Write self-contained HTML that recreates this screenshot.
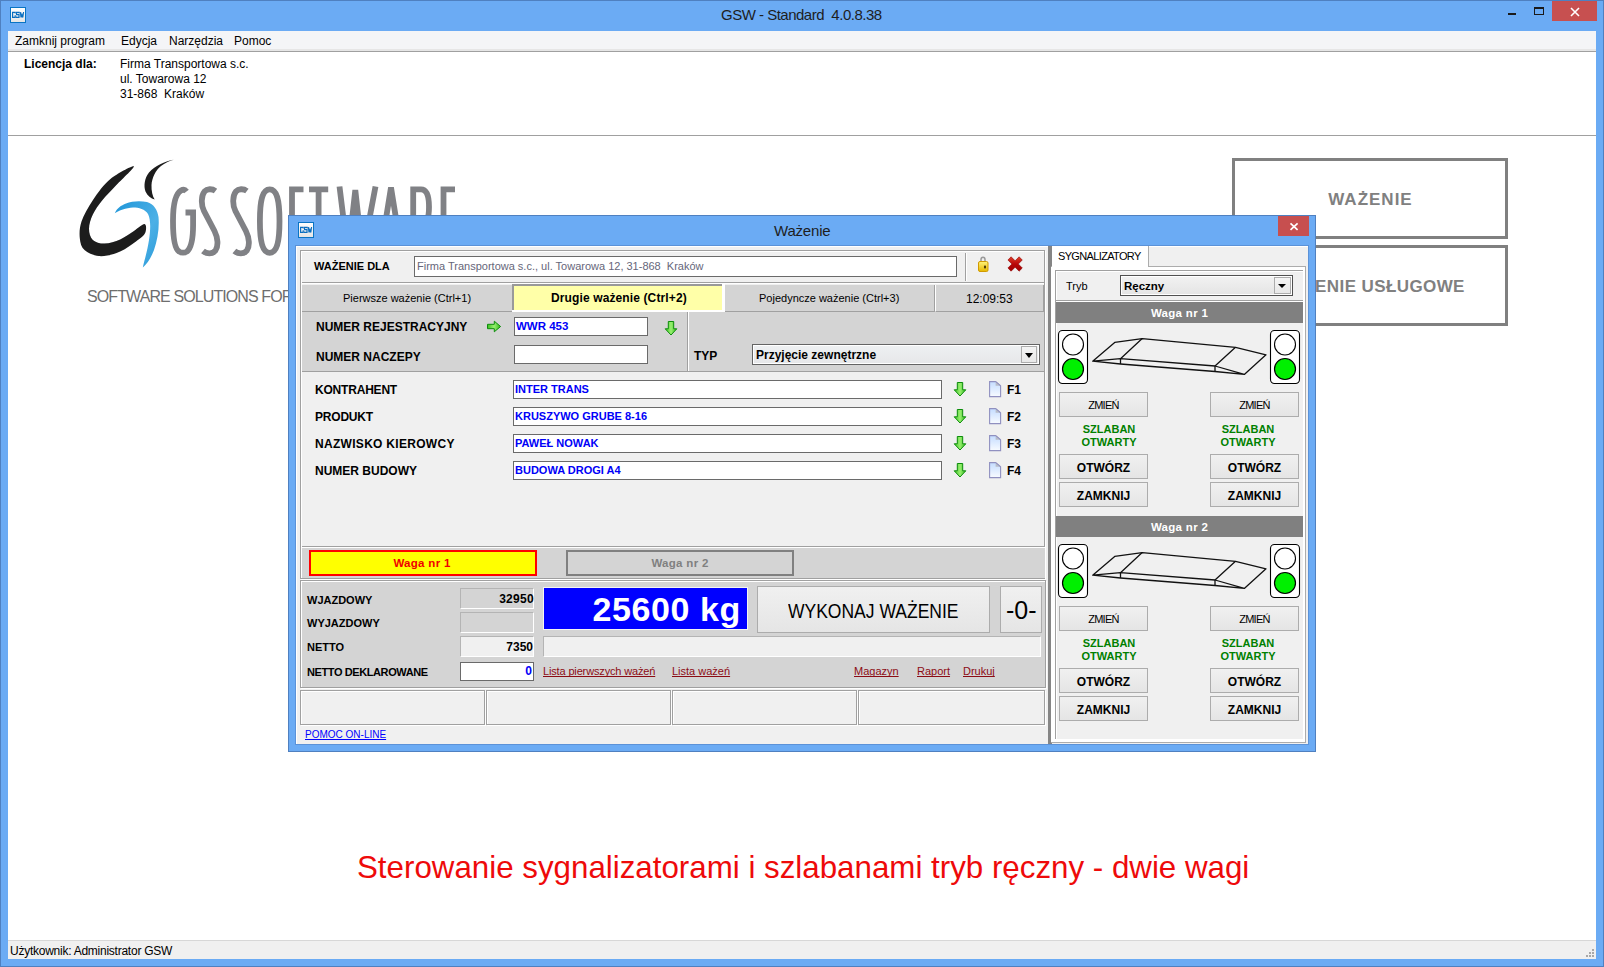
<!DOCTYPE html>
<html><head><meta charset="utf-8">
<style>
*{margin:0;padding:0;box-sizing:border-box}
html,body{width:1604px;height:967px;overflow:hidden}
body{position:relative;background:#6babf4;font-family:"Liberation Sans",sans-serif;color:#000}
.a{position:absolute}
.t{position:absolute;white-space:pre;line-height:1}
.b{font-weight:bold}
.etch{border:1px solid #a0a0a0;box-shadow:inset 1px 1px 0 #fff,1px 1px 0 #fff}
.etch2{border:1px solid #a0a0a0;box-shadow:inset 1px 1px 0 #fff,1px 1px 0 #fff;background:#f0f0f0}
.inp{background:#fff;border:1px solid #6a6a6a}
.ro{background:#d4d4d4;border:1px solid #b4b4b4;border-right-color:#fff;border-bottom-color:#fff}
.btn{border:1px solid #acacac;background:linear-gradient(#f0f0f0,#e5e5e5)}
.combo{border:1px solid #646464;box-shadow:inset 0 0 0 1px #fff;background:linear-gradient(#eef0f2,#e6e7e9)}
.cbtn{border:1px solid #acacac;background:linear-gradient(#f4f4f4,#e8e8e8)}
.tri{width:0;height:0;border-left:4.5px solid transparent;border-right:4.5px solid transparent;border-top:5px solid #000}
.lnk{color:#8c0c14;text-decoration:underline;text-decoration-skip-ink:none}
</style></head><body>
<svg width="0" height="0" style="position:absolute"><defs><linearGradient id="ga" x1="0" y1="0" x2="1" y2="0"><stop offset="0" stop-color="#3cc020"/><stop offset="0.5" stop-color="#98f070"/><stop offset="1" stop-color="#30b818"/></linearGradient><linearGradient id="gd" x1="0" y1="0" x2="0" y2="1"><stop offset="0" stop-color="#c4dcff"/><stop offset="1" stop-color="#f8fbff"/></linearGradient></defs></svg>
<!-- main window frame -->
<div class="a" style="left:0;top:0;width:1604px;height:967px;border:1px solid #4f80c0"></div>
<!-- icon -->
<svg class="a" style="left:10px;top:7px" width="16" height="16" viewBox="0 0 16 16">
<defs><linearGradient id="ig10" x1="0" y1="0" x2="0" y2="1"><stop offset="0" stop-color="#fff"/><stop offset="1" stop-color="#e4e4e4"/></linearGradient></defs>
<rect x="0.5" y="0.5" width="15" height="15" fill="url(#ig10)" stroke="#0a74c4" stroke-width="1"/>
<g fill="none" stroke="#0a6ec0" stroke-width="1.2">
<path d="M5.2,6.6 V5.4 H2.6 V10.4 H5.2 V8.2"/>
<path d="M9.2,6.4 V5.4 H6.6 V7.7 H9 V10.4 H6.4 V9.4"/>
<path d="M10.3,5 L11,10.5 L11.9,7.2 L12.8,10.5 L13.6,5" stroke-width="1.1"/>
</g></svg>
<!-- title -->
<div class="t" style="left:721px;top:7px;font-size:15px;letter-spacing:-0.5px;color:#1e1e1e">GSW - Standard  4.0.8.38</div>
<!-- min max close -->
<div class="a" style="left:1508px;top:13px;width:8px;height:2px;background:#1a1a1a"></div>
<div class="a" style="left:1534px;top:7px;width:10px;height:8px;border:1px solid #1a1a1a;border-top-width:2px"></div>
<div class="a" style="left:1552px;top:1px;width:45px;height:20px;background:#c75050"></div>
<svg class="a" style="left:1570px;top:7px" width="10" height="10" viewBox="0 0 10 10"><path d="M1,1 L9,9 M9,1 L1,9" stroke="#fff" stroke-width="1.6"/></svg>

<!-- client -->
<div class="a" style="left:8px;top:31px;width:1588px;height:928px;background:#fff;overflow:hidden">
  <!-- menu -->
  <div class="a" style="left:0;top:0;width:1588px;height:21px;background:#f4f5f7;border-bottom:1px solid #a0a0a0;box-shadow:inset 0 -2px 0 #e6e6e6"></div>
  <div class="t" style="left:7px;top:4px;font-size:12px;color:#000">Zamknij program</div>
  <div class="t" style="left:113px;top:4px;font-size:12px;color:#000">Edycja</div>
  <div class="t" style="left:161px;top:4px;font-size:12px;color:#000">Narzędzia</div>
  <div class="t" style="left:226px;top:4px;font-size:12px;color:#000">Pomoc</div>
  <!-- license -->
  <div class="t b" style="left:16px;top:27px;font-size:12px">Licencja dla:</div>
  <div class="t" style="left:112px;top:26px;font-size:12px;line-height:15px">Firma Transportowa s.c.
ul. Towarowa 12
31-868  Kraków</div>
  <div class="a" style="left:0;top:104px;width:1588px;height:1px;background:#a0a0a0"></div>
  <!-- status bar -->
  <div class="a" style="left:0;top:909px;width:1588px;height:19px;background:#f0f0f0;border-top:1px solid #d7d7d7"></div>
  <div class="a" style="left:1584px;top:918px;width:2px;height:2px;background:#a8a8a8"></div><div class="a" style="left:1581px;top:921px;width:2px;height:2px;background:#a8a8a8"></div><div class="a" style="left:1584px;top:921px;width:2px;height:2px;background:#a8a8a8"></div><div class="a" style="left:1578px;top:924px;width:2px;height:2px;background:#a8a8a8"></div><div class="a" style="left:1581px;top:924px;width:2px;height:2px;background:#a8a8a8"></div><div class="a" style="left:1584px;top:924px;width:2px;height:2px;background:#a8a8a8"></div>
  <div class="t" style="left:2px;top:914px;font-size:12px;letter-spacing:-0.25px;color:#000">Użytkownik: Administrator GSW</div>
</div>

<!-- logo -->
<svg class="a" style="left:70px;top:150px" width="120" height="125" viewBox="70 150 120 125">
  <defs><linearGradient id="bl" x1="0" y1="0" x2="1" y2="1"><stop offset="0" stop-color="#1f96d8"/><stop offset="0.6" stop-color="#4cb0e6"/><stop offset="1" stop-color="#2a9ad8"/></linearGradient></defs>
  <path d="M130.9,169.3 C131.1,169.5 120.2,180.8 115.4,185.9 C110.7,191.1 106.1,195.4 102.3,200.2 C98.6,204.9 95.1,209.7 92.8,214.5 C90.6,219.2 89.0,224.5 89.0,228.7 C89.0,233.0 90.2,237.5 92.8,240.0 C95.5,242.5 100.2,243.7 104.7,243.6 C109.3,243.5 115.6,241.3 120.2,239.4 C124.7,237.5 128.5,234.5 132.1,232.3 C135.6,230.1 141.6,226.0 141.6,226.3 C141.6,226.7 135.6,231.9 132.1,234.4 C128.5,237.0 124.7,239.7 120.2,241.6 C115.6,243.4 109.5,245.6 104.7,245.6 C100.0,245.6 94.6,244.6 91.6,241.8 C88.7,239.0 87.0,233.5 86.9,228.7 C86.8,224.0 88.8,218.2 91.1,213.3 C93.3,208.3 96.7,203.8 100.6,199.0 C104.4,194.2 109.2,189.7 114.2,184.7 C119.3,179.8 130.7,169.1 130.9,169.3 Z" fill="#aeb2b6" opacity="0.8"/><path d="M133.9,166.3 C133.1,165.1 117.5,173.1 110.7,178.8 C103.8,184.4 97.7,193.0 92.8,200.2 C88.0,207.3 83.7,215.2 81.5,221.6 C79.4,227.9 79.3,233.5 79.8,238.2 C80.3,243.0 81.3,247.2 84.5,250.1 C87.7,253.1 93.4,255.6 98.8,256.1 C104.1,256.6 111.1,255.1 116.6,253.1 C122.2,251.1 127.4,247.4 132.1,244.2 C136.7,241.0 142.5,237.4 144.6,234.1 C146.6,230.7 146.6,224.3 144.6,224.0 C142.5,223.7 136.1,229.7 132.1,232.3 C128.0,234.9 124.7,237.5 120.2,239.4 C115.6,241.3 109.3,243.5 104.7,243.6 C100.2,243.7 95.5,242.5 92.8,240.0 C90.2,237.5 89.0,233.0 89.0,228.7 C89.0,224.5 90.6,219.2 92.8,214.5 C95.1,209.7 98.6,204.9 102.3,200.2 C106.1,195.4 110.2,191.6 115.4,185.9 C120.7,180.3 134.7,167.5 133.9,166.3 Z" fill="#1c1c1c"/>
  <path d="M173.7,159.8 C166,161 155,165.5 149,172.5 C144.5,178 143.5,186 145.5,191.5 C147.5,196 151,198.5 154.7,199.6 C152.5,196 151.3,191 151.5,185 C152,178 155.5,170 161,166 C165,163 169,161 173.7,159.8 Z" fill="#1c1c1c"/>
  <path d="M114.8,213.3 C117,208 121,205.5 126,203.5 C132,201 140,200.5 147,202 C154,204 157.5,210 158.5,217 C159.5,228 157.5,240 154,250 C151,258 147,264 142.8,267.4 C144.5,260 147.5,250 149,240 C150.5,230 151,220 148,214 C145,209 139,207.5 133,207.5 C126,207.8 119,210.5 114.8,213.3 Z" fill="url(#bl)"/>
</svg>
<svg class="a" style="left:160px;top:180px" width="310" height="85" viewBox="160 180 310 85">
<g fill="none" stroke="#808185" stroke-width="5.8" stroke-linecap="butt">
<path d="M186.5,191.5 C185,189.5 183,189.3 181,190.5 C175,194 173,206 173,221 C173,238 175,249 179,251.5 C181,253 185,253 187,251.5 C191,248 193.1,239 193.1,225 V212.5 H185.5"/>
<path d="M215.5,191 C212,188.5 207,188.7 204.5,191.5 C201,196 201,205 204,211 L214.5,231 C218,238 218.5,246 215.5,250.5 C212.5,254.5 206.5,254 203,251"/>
<path d="M246.9,191 C243.4,188.5 238.4,188.7 235.9,191.5 C232.4,196 232.4,205 235.4,211 L245.9,231 C249.4,238 249.9,246 246.9,250.5 C243.9,254.5 237.9,254 234.4,251"/>
<path d="M269.7,189.4 C276.5,189.4 279.5,199 279.5,221 C279.5,243 276.5,252.79999999999998 269.7,252.79999999999998 C262.9,252.79999999999998 259.9,243 259.9,221 C259.9,199 262.9,189.4 269.7,189.4 Z"/>
<path d="M292,255.7 V189.4 H303.5 M292,219 H301"/>
<path d="M309,189.4 H328.2 M318.6,189.4 V255.7"/>
<path d="M339.5,186.5 L348,255.5 L355.3,190 L362.5,255.5 L375.5,186.5"/>
<path d="M380,255.7 L391,187.5 L402,255.7 M384,232 H398"/>
<path d="M413.2,255.7 V189.4 H421 C427,189.4 429,196 429,207 C429,218 427,223 421,223 H413.2 M420,223 L430,255.7"/>
<path d="M443.5,255.7 V189.4 H455 M443.5,219 H453 M443.5,252.79999999999998 H455.5"/>
</g></svg>
<div class="t" style="left:87px;top:289px;font-size:16px;color:#6e6e6e;letter-spacing:-0.9px">SOFTWARE SOLUTIONS FOR</div>

<!-- right boxes -->
<div class="a" style="left:1232px;top:158px;width:276px;height:81px;border:3px solid #808080;background:#fff"></div>
<div class="t b" style="left:1232px;top:191px;width:277px;text-align:center;font-size:17px;letter-spacing:1px;color:#808080">WAŻENIE</div>
<div class="a" style="left:1232px;top:245px;width:276px;height:81px;border:3px solid #808080;background:#fff"></div>
<div class="t b" style="left:1232px;top:278px;width:277px;text-align:center;font-size:17px;letter-spacing:0.4px;color:#808080">WAŻENIE USŁUGOWE</div>

<!-- red caption -->
<div class="t" style="left:357px;top:852px;font-size:31.3px;color:#ee0a0a">Sterowanie sygnalizatorami i szlabanami tryb ręczny - dwie wagi</div>

<!-- DIALOG -->
<div class="a" style="left:288px;top:215px;width:1028px;height:537px;background:#6babf4;border:1px solid #4f80c0"></div>
<svg class="a" style="left:298px;top:222px" width="16" height="16" viewBox="0 0 16 16">
<defs><linearGradient id="ig298" x1="0" y1="0" x2="0" y2="1"><stop offset="0" stop-color="#fff"/><stop offset="1" stop-color="#e4e4e4"/></linearGradient></defs>
<rect x="0.5" y="0.5" width="15" height="15" fill="url(#ig298)" stroke="#0a74c4" stroke-width="1"/>
<g fill="none" stroke="#0a6ec0" stroke-width="1.2">
<path d="M5.2,6.6 V5.4 H2.6 V10.4 H5.2 V8.2"/>
<path d="M9.2,6.4 V5.4 H6.6 V7.7 H9 V10.4 H6.4 V9.4"/>
<path d="M10.3,5 L11,10.5 L11.9,7.2 L12.8,10.5 L13.6,5" stroke-width="1.1"/>
</g></svg>
<div class="t" style="left:774px;top:223px;font-size:15px;letter-spacing:-0.2px;color:#1e1e1e">Ważenie</div>
<div class="a" style="left:1278px;top:216px;width:31px;height:20px;background:#c74f4f"></div>
<svg class="a" style="left:1288px;top:221px" width="12" height="12" viewBox="0 0 12 12"><path d="M2.5,2.3 L9.6,8.8 M9.6,2.3 L2.5,8.8" stroke="#fff" stroke-width="1.7"/></svg>
<div class="a" style="left:295px;top:245px;width:1014px;height:500px;border:1px solid #5b92d8;background:#f0f0f0;box-shadow:inset 1px 1px 0 #fff"></div>

<!-- main frame -->
<div class="a etch" style="left:300px;top:250px;width:745px;height:329px"></div>
<div class="a" style="left:302px;top:282px;width:742px;height:1px;background:#a0a0a0;box-shadow:0 1px 0 #fff"></div>
<div class="t b" style="left:314px;top:261px;font-size:11px">WAŻENIE DLA</div>
<div class="a inp" style="left:414px;top:256px;width:543px;height:21px"></div>
<div class="t" style="left:417px;top:261px;font-size:11px;color:#66667a">Firma Transportowa s.c., ul. Towarowa 12, 31-868  Kraków</div>
<div class="a" style="left:965px;top:253px;width:1px;height:28px;background:#a0a0a0;box-shadow:1px 0 0 #fff"></div>
<!-- lock icon -->
<svg class="a" style="left:976px;top:255px" width="16" height="18" viewBox="976 255 16 18">
 <defs><linearGradient id="lk" x1="0" y1="0" x2="0" y2="1"><stop offset="0" stop-color="#fff27a"/><stop offset="1" stop-color="#e6b800"/></linearGradient></defs>
 <path d="M981,264 V259.5 C981,257.8 982,257.2 983,257.2 C984,257.2 985,257.8 985,259.5 V264" fill="none" stroke="#9a9a9a" stroke-width="1.5"/>
 <rect x="978.5" y="261.5" width="9.5" height="10" rx="1.5" fill="url(#lk)" stroke="#d19a00" stroke-width="1"/>
 <path d="M985,265 L986.2,267 L985,269 L983.8,267 Z" fill="#3a2a00"/>
</svg>
<!-- red x -->
<svg class="a" style="left:1006px;top:255px" width="18" height="18" viewBox="1006 255 18 18">
 <defs><linearGradient id="rx" x1="0" y1="0" x2="0" y2="1"><stop offset="0" stop-color="#e0402a"/><stop offset="0.5" stop-color="#b80808"/><stop offset="1" stop-color="#a00000"/></linearGradient></defs>
 <path d="M1007.9,260.0 L1011.1,256.8 L1015.1,260.8 L1019.1,256.8 L1022.3,260.0 L1018.3,264.0 L1022.3,268.0 L1019.1,271.2 L1015.1,267.2 L1011.1,271.2 L1007.9,268.0 L1011.9,264.0 Z" fill="url(#rx)" stroke="#900000" stroke-width="0.6" stroke-linejoin="round"/>
</svg>

<!-- tabs -->
<div class="a" style="left:302px;top:285px;width:210px;height:27px;background:#d4d4d4;border-bottom:1px solid #a0a0a0"></div>
<div class="t" style="left:343px;top:293px;font-size:11px;color:#000">Pierwsze ważenie (Ctrl+1)</div>
<div class="a" style="left:512px;top:284px;width:213px;height:28px;background:#fff;"></div><div class="a" style="left:512px;top:284px;width:210px;height:26px;background:#ffffa8;border-left:2px solid #999;border-top:2px solid #999"></div>
<div class="t b" style="left:551px;top:292px;font-size:12px;letter-spacing:0.12px;color:#000">Drugie ważenie (Ctrl+2)</div>
<div class="a" style="left:725px;top:285px;width:210px;height:27px;background:#d4d4d4;border-bottom:1px solid #a0a0a0;border-right:1px solid #a0a0a0"></div>
<div class="t" style="left:759px;top:293px;font-size:11px;color:#000">Pojedyncze ważenie (Ctrl+3)</div>
<div class="a" style="left:935px;top:285px;width:109px;height:27px;background:#d4d4d4;border-left:1px solid #fff;border-bottom:1px solid #a0a0a0;border-right:1px solid #a0a0a0"></div>
<div class="t" style="left:966px;top:293px;font-size:12px;color:#000">12:09:53</div>

<!-- registration panel -->
<div class="a" style="left:302px;top:312px;width:742px;height:60px;background:#d4d4d4;border-bottom:1px solid #a0a0a0"></div>
<div class="a" style="left:687px;top:312px;width:1px;height:59px;background:#a0a0a0;box-shadow:1px 0 0 #fff"></div>
<div class="t b" style="left:316px;top:321px;font-size:12px">NUMER REJESTRACYJNY</div>
<svg class="a" style="left:486px;top:320px" width="16" height="13" viewBox="0 0 16 13"><path d="M1.5,4.3 H8.3 V1.2 L14.6,6.5 L8.3,11.8 V8.7 H1.5 Z" fill="url(#ga)" stroke="#0c8c0c" stroke-width="1"/></svg>
<div class="a inp" style="left:514px;top:317px;width:134px;height:19px"></div>
<div class="t b" style="left:516px;top:321px;font-size:11.5px;color:#0000f8">WWR 453</div>
<svg class="a" style="left:664px;top:320px" width="14" height="16" viewBox="0 0 14 16"><path d="M4.3,1.5 H9.7 V8.8 H12.8 L7,15 L1.2,8.8 H4.3 Z" fill="url(#ga)" stroke="#0c8c0c" stroke-width="1"/></svg>
<div class="t b" style="left:316px;top:351px;font-size:12px">NUMER NACZEPY</div>
<div class="a inp" style="left:514px;top:345px;width:134px;height:19px"></div>
<div class="t b" style="left:694px;top:350px;font-size:12px">TYP</div>
<div class="a combo" style="left:752px;top:344px;width:288px;height:21px"></div>
<div class="t b" style="left:756px;top:349px;font-size:12px">Przyjęcie zewnętrzne</div>
<div class="a cbtn" style="left:1021px;top:346px;width:16px;height:17px"></div>
<div class="a tri" style="left:1025px;top:353px"></div>

<!-- form -->
<div class="t b" style="left:315px;top:384px;font-size:12px;letter-spacing:-0.2px">KONTRAHENT</div>
<div class="a inp" style="left:513px;top:380px;width:429px;height:19px"></div>
<div class="t b" style="left:515px;top:384px;font-size:11px;color:#0000f8">INTER TRANS</div>
<svg class="a" style="left:953px;top:381px" width="14" height="16" viewBox="0 0 14 16"><path d="M4.3,1.5 H9.7 V8.8 H12.8 L7,15 L1.2,8.8 H4.3 Z" fill="url(#ga)" stroke="#0c8c0c" stroke-width="1"/></svg>
<svg class="a" style="left:988px;top:381px" width="14" height="17" viewBox="0 0 14 17"><path d="M1.6,0.6 H7.6 L12.6,4.8 V15.6 H1.6 Z" fill="url(#gd)" stroke="#9090c0" stroke-width="1.1"/><path d="M7.6,0.6 V4.8 H12.6 Z" fill="#b8bcc8" stroke="none"/><path d="M7.6,0.6 L12.6,4.8" stroke="#9090c0" stroke-width="1"/></svg>
<div class="t b" style="left:1007px;top:384px;font-size:12px">F1</div>
<div class="t b" style="left:315px;top:411px;font-size:12px;letter-spacing:-0.2px">PRODUKT</div>
<div class="a inp" style="left:513px;top:407px;width:429px;height:19px"></div>
<div class="t b" style="left:515px;top:411px;font-size:11px;color:#0000f8">KRUSZYWO GRUBE 8-16</div>
<svg class="a" style="left:953px;top:408px" width="14" height="16" viewBox="0 0 14 16"><path d="M4.3,1.5 H9.7 V8.8 H12.8 L7,15 L1.2,8.8 H4.3 Z" fill="url(#ga)" stroke="#0c8c0c" stroke-width="1"/></svg>
<svg class="a" style="left:988px;top:408px" width="14" height="17" viewBox="0 0 14 17"><path d="M1.6,0.6 H7.6 L12.6,4.8 V15.6 H1.6 Z" fill="url(#gd)" stroke="#9090c0" stroke-width="1.1"/><path d="M7.6,0.6 V4.8 H12.6 Z" fill="#b8bcc8" stroke="none"/><path d="M7.6,0.6 L12.6,4.8" stroke="#9090c0" stroke-width="1"/></svg>
<div class="t b" style="left:1007px;top:411px;font-size:12px">F2</div>
<div class="t b" style="left:315px;top:438px;font-size:12px;letter-spacing:0.3px">NAZWISKO KIEROWCY</div>
<div class="a inp" style="left:513px;top:434px;width:429px;height:19px"></div>
<div class="t b" style="left:515px;top:438px;font-size:11px;color:#0000f8">PAWEŁ NOWAK</div>
<svg class="a" style="left:953px;top:435px" width="14" height="16" viewBox="0 0 14 16"><path d="M4.3,1.5 H9.7 V8.8 H12.8 L7,15 L1.2,8.8 H4.3 Z" fill="url(#ga)" stroke="#0c8c0c" stroke-width="1"/></svg>
<svg class="a" style="left:988px;top:435px" width="14" height="17" viewBox="0 0 14 17"><path d="M1.6,0.6 H7.6 L12.6,4.8 V15.6 H1.6 Z" fill="url(#gd)" stroke="#9090c0" stroke-width="1.1"/><path d="M7.6,0.6 V4.8 H12.6 Z" fill="#b8bcc8" stroke="none"/><path d="M7.6,0.6 L12.6,4.8" stroke="#9090c0" stroke-width="1"/></svg>
<div class="t b" style="left:1007px;top:438px;font-size:12px">F3</div>
<div class="t b" style="left:315px;top:465px;font-size:12px">NUMER BUDOWY</div>
<div class="a inp" style="left:513px;top:461px;width:429px;height:19px"></div>
<div class="t b" style="left:515px;top:465px;font-size:11px;color:#0000f8">BUDOWA DROGI A4</div>
<svg class="a" style="left:953px;top:462px" width="14" height="16" viewBox="0 0 14 16"><path d="M4.3,1.5 H9.7 V8.8 H12.8 L7,15 L1.2,8.8 H4.3 Z" fill="url(#ga)" stroke="#0c8c0c" stroke-width="1"/></svg>
<svg class="a" style="left:988px;top:462px" width="14" height="17" viewBox="0 0 14 17"><path d="M1.6,0.6 H7.6 L12.6,4.8 V15.6 H1.6 Z" fill="url(#gd)" stroke="#9090c0" stroke-width="1.1"/><path d="M7.6,0.6 V4.8 H12.6 Z" fill="#b8bcc8" stroke="none"/><path d="M7.6,0.6 L12.6,4.8" stroke="#9090c0" stroke-width="1"/></svg>
<div class="t b" style="left:1007px;top:465px;font-size:12px">F4</div>


<div class="a" style="left:302px;top:546px;width:743px;height:1px;background:#a0a0a0;box-shadow:0 1px 0 #fff"></div>
<div class="a" style="left:302px;top:548px;width:743px;height:30px;background:#d4d4d4"></div>
<div class="a" style="left:309px;top:550px;width:228px;height:26px;background:#ffff00;border:2px solid #ff0000"></div>
<div class="t b" style="left:309px;width:226px;text-align:center;top:558px;font-size:11.5px;letter-spacing:0.3px;color:#f00000">Waga nr 1</div>
<div class="a" style="left:566px;top:550px;width:228px;height:26px;background:#d4d4d4;border:2px solid #808080"></div>
<div class="t b" style="left:566px;width:228px;text-align:center;top:558px;font-size:11.5px;letter-spacing:0.3px;color:#808080">Waga nr 2</div>

<!-- weight panel -->
<div class="a etch" style="left:300px;top:580px;width:746px;height:108px"></div>
<div class="a" style="left:302px;top:582px;width:743px;height:105px;background:#d4d4d4"></div>
<div class="t b" style="left:307px;top:594.5px;font-size:11px">WJAZDOWY</div>
<div class="t b" style="left:307px;top:618px;font-size:11px">WYJAZDOWY</div>
<div class="t b" style="left:307px;top:642px;font-size:11px">NETTO</div>
<div class="t b" style="left:307px;top:667px;font-size:11px;letter-spacing:-0.4px">NETTO DEKLAROWANE</div>
<div class="a ro" style="left:460px;top:588px;width:74px;height:21px"></div>
<div class="t b" style="left:460px;top:593px;width:74px;text-align:right;font-size:12px;letter-spacing:0.3px">32950</div>
<div class="a ro" style="left:460px;top:612px;width:74px;height:21px"></div>
<div class="a ro" style="left:460px;top:636px;width:74px;height:21px;background:#f0f0f0"></div>
<div class="t b" style="left:460px;top:641px;width:73px;text-align:right;font-size:12px">7350</div>
<div class="a inp" style="left:460px;top:662px;width:74px;height:19px"></div>
<div class="t b" style="left:460px;top:665px;width:72px;text-align:right;font-size:12px;color:#0000f8">0</div>

<div class="a" style="left:543px;top:587px;width:205px;height:43px;background:#0000ff;border:1px solid #f4f4f4"></div>
<div class="t b" style="left:543px;top:591.5px;width:198px;text-align:right;font-size:34px;color:#fff;letter-spacing:0.6px">25600 kg</div>
<div class="a btn" style="left:757px;top:586px;width:233px;height:47px"></div>
<div class="t" style="left:788px;top:600.5px;font-size:20px;transform:scaleX(.875);transform-origin:0 0">WYKONAJ WAŻENIE</div>
<div class="a btn" style="left:1000px;top:586px;width:42px;height:47px"></div>
<div class="t" style="left:1006px;top:598px;font-size:25px">-0-</div>
<div class="a ro" style="left:543px;top:636px;width:498px;height:21px;background:#f0f0f0"></div>
<div class="t lnk" style="left:543px;top:666px;font-size:11px;letter-spacing:-0.15px">Lista pierwszych ważeń</div>
<div class="t lnk" style="left:672px;top:666px;font-size:11px">Lista ważeń</div>
<div class="t lnk" style="left:854px;top:666px;font-size:11px">Magazyn</div>
<div class="t lnk" style="left:917px;top:666px;font-size:11px">Raport</div>
<div class="t lnk" style="left:963px;top:666px;font-size:11px">Drukuj</div>

<!-- status panels -->
<div class="a etch2" style="left:300px;top:690px;width:185px;height:35px"></div>
<div class="a etch2" style="left:486px;top:690px;width:185px;height:35px"></div>
<div class="a etch2" style="left:672px;top:690px;width:185px;height:35px"></div>
<div class="a etch2" style="left:858px;top:690px;width:187px;height:35px"></div>
<div class="t" style="left:305px;top:730px;font-size:10px;color:#0000ff;text-decoration:underline;text-decoration-skip-ink:none">POMOC ON-LINE</div>

<!-- splitter -->
<div class="a" style="left:1048px;top:246px;width:4px;height:498px;background:#858585"></div>

<!-- side panel -->
<div class="a" style="left:1051px;top:266px;width:255px;height:477px;background:#fff;border-top:1px solid #acacac;border-right:1px solid #acacac;border-bottom:1px solid #acacac"></div>
<div class="a" style="left:1052px;top:246px;width:97px;height:21px;background:#fff;border-right:1px solid #acacac"></div>
<div class="t" style="left:1058px;top:251px;font-size:11px;letter-spacing:-0.65px">SYGNALIZATORY</div>
<div class="a" style="left:1055px;top:270px;width:248px;height:469px;background:#f0f0f0;border-left:1px solid #a0a0a0;border-top:1px solid #a0a0a0;box-shadow:inset 1px 1px 0 #fff"></div>
<div class="a" style="left:1056px;top:300px;width:247px;height:1px;background:#a0a0a0;box-shadow:0 1px 0 #fff"></div>
<div class="t" style="left:1066px;top:281px;font-size:11px">Tryb</div>
<div class="a" style="left:1120px;top:275px;width:173px;height:21px;border:1px solid #505050;box-shadow:inset 0 0 0 1px #fff;background:linear-gradient(#f2f2f2,#e4e4e4)"></div>
<div class="t b" style="left:1124px;top:281px;font-size:11.5px">Ręczny</div>
<div class="a cbtn" style="left:1274px;top:277px;width:17px;height:17px"></div>
<div class="a tri" style="left:1278px;top:284px;border-left-width:4px;border-right-width:4px;border-top-width:4px"></div>
<div class="a" style="left:1056px;top:302px;width:247px;height:21px;background:#808080"></div>
<div class="t b" style="left:1056px;top:308px;width:247px;text-align:center;font-size:11.5px;letter-spacing:0.3px;color:#fff">Waga nr 1</div>
<svg class="a" style="left:1056px;top:328px" width="247" height="60" viewBox="1056 328 247 60">
 <g fill="#fff" stroke="#000" stroke-width="1.1">
 <rect x="1058.5" y="330.5" width="29" height="53" rx="4"/>
 <rect x="1270.5" y="330.5" width="29" height="53" rx="4"/>
 <circle cx="1073" cy="344.5" r="10.5"/>
 <circle cx="1285" cy="344.5" r="10.5"/>
 </g>
 <g fill="#00f000" stroke="#000" stroke-width="1.2">
 <circle cx="1073" cy="369" r="10.5"/>
 <circle cx="1285" cy="369" r="10.5"/>
 </g>
 <g fill="none" stroke="#111" stroke-width="1.3" stroke-linejoin="round">
 <path d="M1092.7,361.2 L1114.7,342.4 L1142.2,338.6 L1235.5,347.3 L1266,354.8 L1244.3,374.4 L1215,371.5 L1120.5,364 L1092.7,361.2 L1120.5,358.7 L1215,366 L1244.3,374.4"/>
 <path d="M1142.2,338.6 L1120.5,358.7 M1235.5,347.3 L1215,366 M1120.5,358.7 V364 M1215,366 V371.5"/>
 </g>
</svg>
<div class="a btn" style="left:1059px;top:392px;width:89px;height:25px"></div>
<div class="t" style="left:1059px;top:400px;width:89px;text-align:center;font-size:11px;letter-spacing:-0.7px">ZMIEŃ</div>
<div class="a btn" style="left:1210px;top:392px;width:89px;height:25px"></div>
<div class="t" style="left:1210px;top:400px;width:89px;text-align:center;font-size:11px;letter-spacing:-0.7px">ZMIEŃ</div>
<div class="t b" style="left:1059px;top:423px;width:100px;text-align:center;font-size:11px;line-height:13px;color:#008000">SZLABAN
OTWARTY</div>
<div class="t b" style="left:1198px;top:423px;width:100px;text-align:center;font-size:11px;line-height:13px;color:#008000">SZLABAN
OTWARTY</div>
<div class="a btn" style="left:1059px;top:454px;width:89px;height:25px"></div>
<div class="t b" style="left:1059px;top:462px;width:89px;text-align:center;font-size:12px">OTWÓRZ</div>
<div class="a btn" style="left:1210px;top:454px;width:89px;height:25px"></div>
<div class="t b" style="left:1210px;top:462px;width:89px;text-align:center;font-size:12px">OTWÓRZ</div>
<div class="a btn" style="left:1059px;top:482px;width:89px;height:25px"></div>
<div class="t b" style="left:1059px;top:490px;width:89px;text-align:center;font-size:12px">ZAMKNIJ</div>
<div class="a btn" style="left:1210px;top:482px;width:89px;height:25px"></div>
<div class="t b" style="left:1210px;top:490px;width:89px;text-align:center;font-size:12px">ZAMKNIJ</div>
<div class="a" style="left:1056px;top:516px;width:247px;height:21px;background:#808080"></div>
<div class="t b" style="left:1056px;top:522px;width:247px;text-align:center;font-size:11.5px;letter-spacing:0.3px;color:#fff">Waga nr 2</div>
<svg class="a" style="left:1056px;top:542px" width="247" height="60" viewBox="1056 328 247 60">
 <g fill="#fff" stroke="#000" stroke-width="1.1">
 <rect x="1058.5" y="330.5" width="29" height="53" rx="4"/>
 <rect x="1270.5" y="330.5" width="29" height="53" rx="4"/>
 <circle cx="1073" cy="344.5" r="10.5"/>
 <circle cx="1285" cy="344.5" r="10.5"/>
 </g>
 <g fill="#00f000" stroke="#000" stroke-width="1.2">
 <circle cx="1073" cy="369" r="10.5"/>
 <circle cx="1285" cy="369" r="10.5"/>
 </g>
 <g fill="none" stroke="#111" stroke-width="1.3" stroke-linejoin="round">
 <path d="M1092.7,361.2 L1114.7,342.4 L1142.2,338.6 L1235.5,347.3 L1266,354.8 L1244.3,374.4 L1215,371.5 L1120.5,364 L1092.7,361.2 L1120.5,358.7 L1215,366 L1244.3,374.4"/>
 <path d="M1142.2,338.6 L1120.5,358.7 M1235.5,347.3 L1215,366 M1120.5,358.7 V364 M1215,366 V371.5"/>
 </g>
</svg>
<div class="a btn" style="left:1059px;top:606px;width:89px;height:25px"></div>
<div class="t" style="left:1059px;top:614px;width:89px;text-align:center;font-size:11px;letter-spacing:-0.7px">ZMIEŃ</div>
<div class="a btn" style="left:1210px;top:606px;width:89px;height:25px"></div>
<div class="t" style="left:1210px;top:614px;width:89px;text-align:center;font-size:11px;letter-spacing:-0.7px">ZMIEŃ</div>
<div class="t b" style="left:1059px;top:637px;width:100px;text-align:center;font-size:11px;line-height:13px;color:#008000">SZLABAN
OTWARTY</div>
<div class="t b" style="left:1198px;top:637px;width:100px;text-align:center;font-size:11px;line-height:13px;color:#008000">SZLABAN
OTWARTY</div>
<div class="a btn" style="left:1059px;top:668px;width:89px;height:25px"></div>
<div class="t b" style="left:1059px;top:676px;width:89px;text-align:center;font-size:12px">OTWÓRZ</div>
<div class="a btn" style="left:1210px;top:668px;width:89px;height:25px"></div>
<div class="t b" style="left:1210px;top:676px;width:89px;text-align:center;font-size:12px">OTWÓRZ</div>
<div class="a btn" style="left:1059px;top:696px;width:89px;height:25px"></div>
<div class="t b" style="left:1059px;top:704px;width:89px;text-align:center;font-size:12px">ZAMKNIJ</div>
<div class="a btn" style="left:1210px;top:696px;width:89px;height:25px"></div>
<div class="t b" style="left:1210px;top:704px;width:89px;text-align:center;font-size:12px">ZAMKNIJ</div>

</body></html>
